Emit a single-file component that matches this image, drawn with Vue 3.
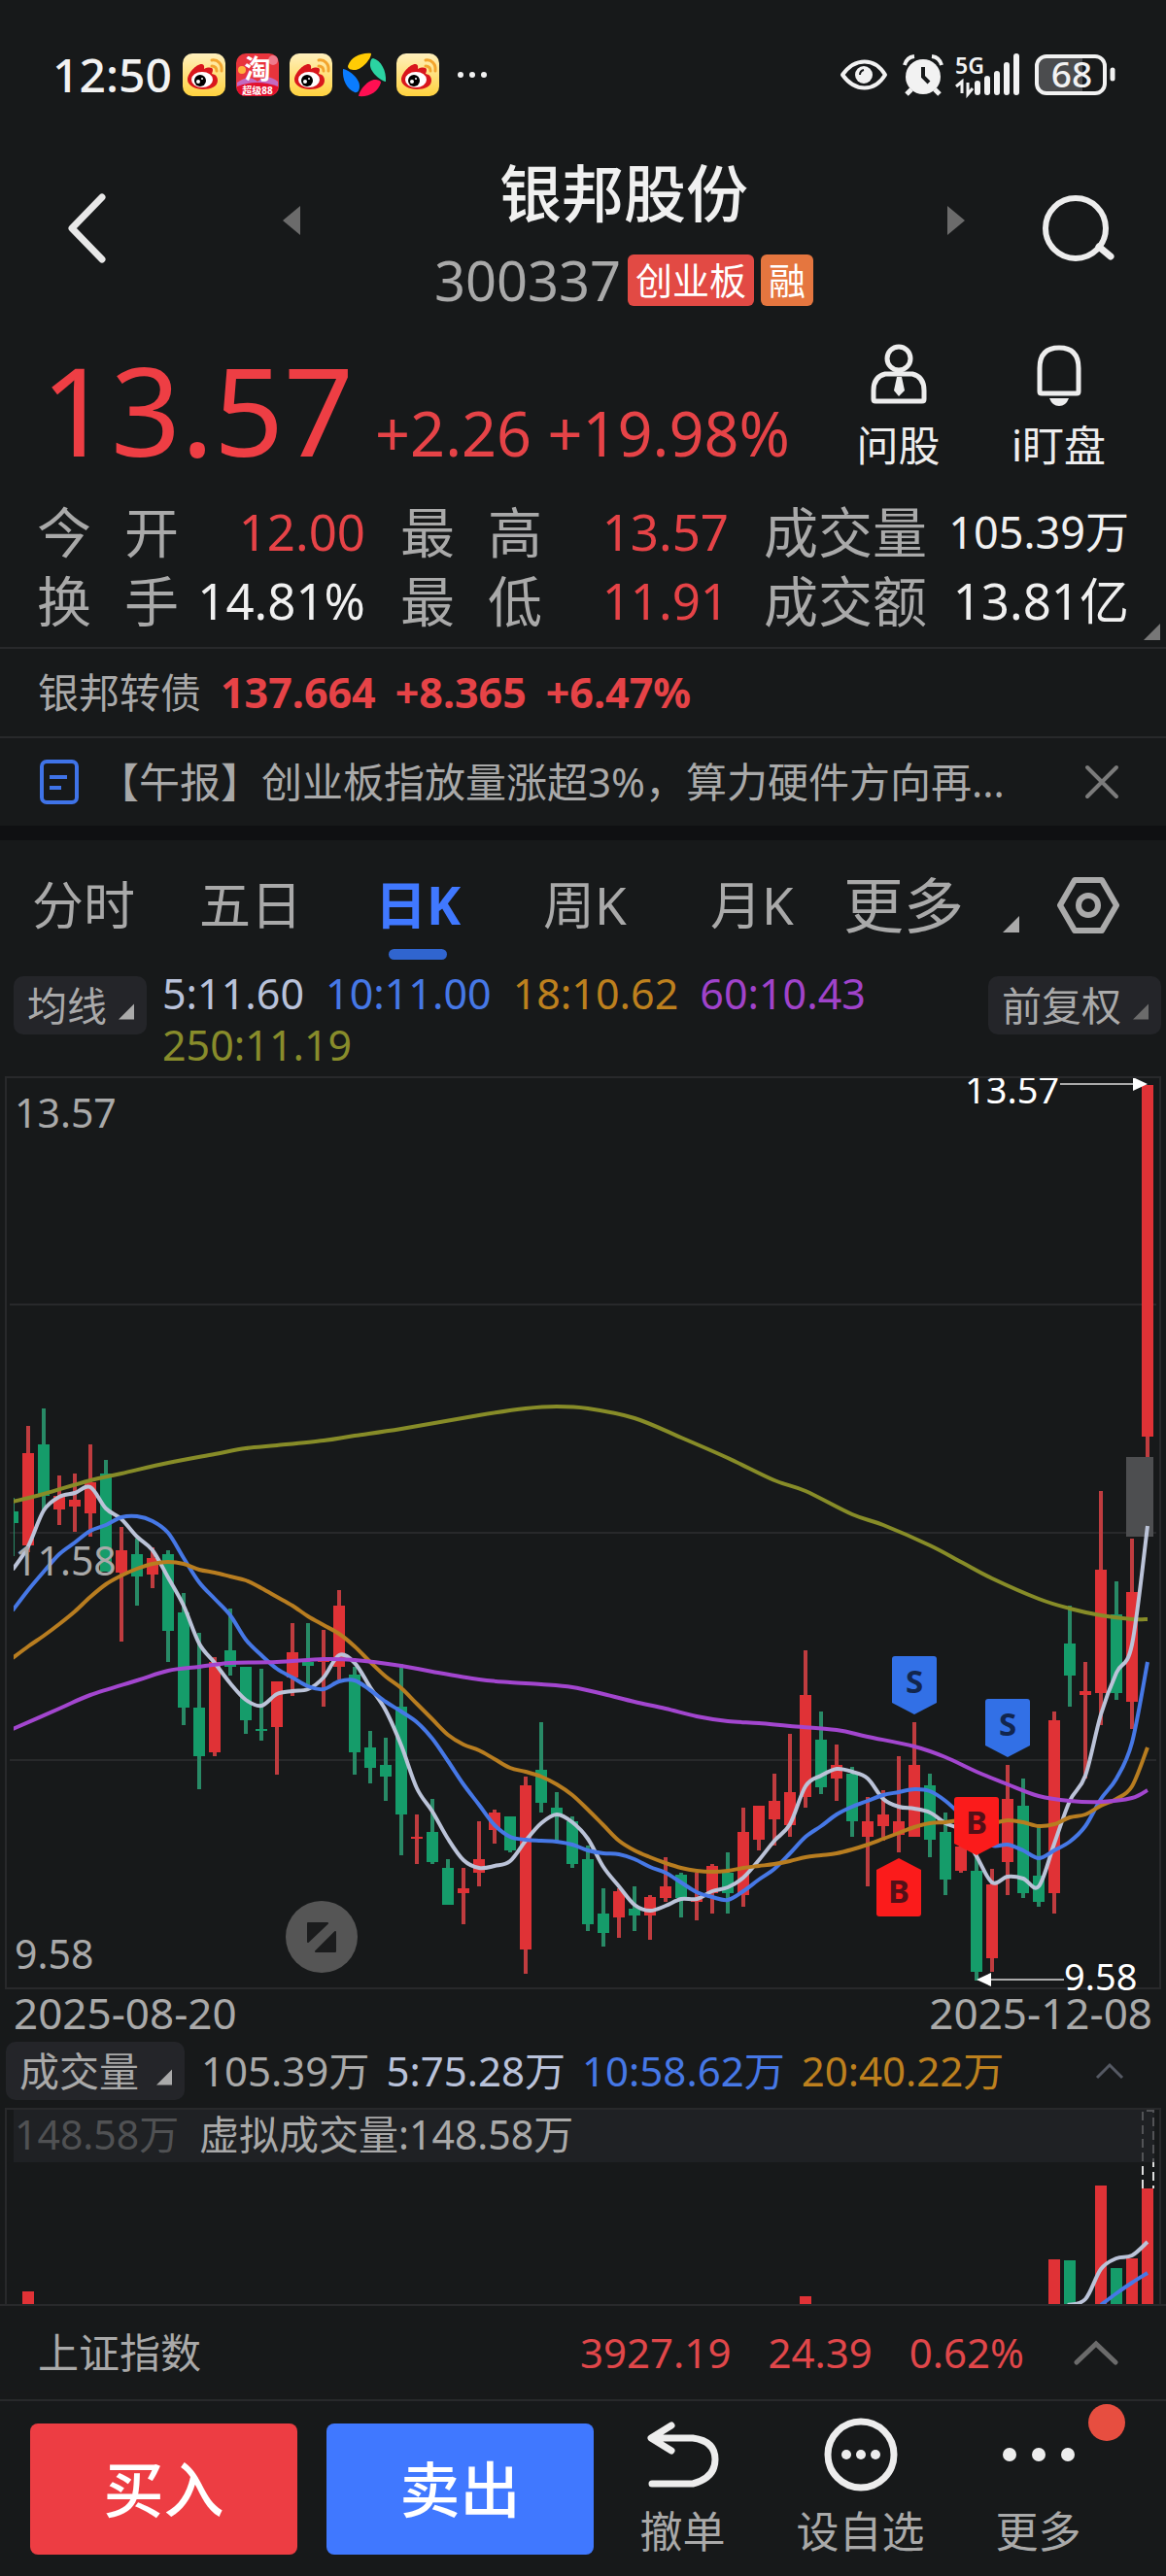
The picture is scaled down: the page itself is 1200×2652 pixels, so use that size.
<script setup>
import {ref, computed} from 'vue';

const tabs = ['分时', '五日', '日K', '周K', '月K'];
const activeTab = ref('日K');
const showNews = ref(true);

const stats = ref([
  {label: '今开', value: '12.00', up: true},
  {label: '最高', value: '13.57', up: true},
  {label: '成交量', value: '105.39万', small: true},
  {label: '换手', value: '14.81%'},
  {label: '最低', value: '11.91', up: true},
  {label: '成交额', value: '13.81亿'},
]);

const maList = [
  {text: '5:11.60', name: 'ma5'},
  {text: '10:11.00', name: 'ma10'},
  {text: '18:10.62', name: 'ma18'},
  {text: '60:10.43', name: 'ma60'},
  {text: '250:11.19', name: 'ma250'},
];

// [涨跌, 最高, 实体上沿, 实体下沿, 最低]  r = 涨, g = 跌
const candles = [
  ['g', 442, 456, 468, 502], ['r', 368, 396, 491, 498], ['g', 350, 387, 440, 455], ['r', 419, 440, 454, 470],
  ['r', 417, 444, 451, 477], ['r', 387, 426, 458, 482], ['g', 403, 417, 518, 518], ['r', 472, 496, 519, 590],
  ['g', 484, 500, 523, 553], ['r', 493, 504, 521, 535], ['g', 496, 500, 579, 611], ['g', 540, 560, 658, 676],
  ['g', 581, 658, 708, 742], ['r', 606, 611, 704, 708], ['g', 556, 599, 616, 625], ['g', 616, 616, 671, 685],
  ['g', 618, 680, 682, 692], ['r', 631, 631, 678, 727], ['r', 571, 601, 627, 646], ['g', 571, 611, 615, 636],
  ['r', 578, 609, 611, 657], ['r', 537, 553, 616, 629], ['g', 616, 624, 704, 727], ['g', 682, 699, 720, 736],
  ['g', 689, 717, 729, 754], ['g', 613, 657, 768, 810], ['r', 768, 791, 793, 819], ['g', 752, 786, 817, 819],
  ['g', 814, 823, 861, 861], ['r', 823, 844, 849, 881], ['r', 775, 814, 828, 842], ['r', 763, 766, 784, 798],
  ['g', 770, 770, 805, 807], ['r', 729, 738, 907, 932], ['g', 673, 722, 756, 766], ['g', 745, 761, 768, 795],
  ['g', 770, 775, 819, 823], ['g', 800, 814, 881, 888], ['g', 844, 870, 890, 904], ['r', 844, 847, 874, 895],
  ['g', 842, 865, 872, 888], ['r', 851, 853, 872, 897], ['r', 812, 842, 854, 858], ['g', 828, 830, 854, 874],
  ['r', 828, 855, 858, 877], ['r', 819, 821, 849, 870], ['g', 807, 828, 849, 870], ['r', 761, 786, 851, 863],
  ['r', 759, 759, 794, 805], ['r', 726, 754, 773, 800], ['r', 685, 745, 779, 791], ['r', 599, 645, 750, 761],
  ['g', 662, 691, 740, 747], ['r', 696, 717, 731, 754], ['g', 719, 726, 775, 791], ['r', 750, 775, 791, 842],
  ['r', 743, 768, 780, 795], ['r', 708, 775, 789, 807], ['r', 673, 717, 791, 791], ['g', 726, 738, 794, 812],
  ['g', 766, 786, 835, 851], ['r', 798, 801, 826, 828], ['g', 809, 826, 930, 939], ['r', 824, 840, 916, 930],
  ['r', 717, 752, 817, 851], ['g', 731, 759, 849, 854], ['g', 780, 831, 858, 863], ['r', 662, 671, 849, 870],
  ['g', 553, 592, 625, 657], ['r', 611, 641, 645, 731], ['r', 435, 516, 643, 676], ['g', 528, 562, 643, 650],
  ['r', 484, 539, 652, 680], ['r', 17, 17, 379, 401],
];

const ma5 = [516, 492, 455, 441, 437, 431, 453, 464, 482, 496, 524, 553, 592, 612, 633, 650, 656, 644, 641, 639, 627,
  604, 612, 637, 661, 697, 741, 765, 793, 815, 823, 821, 816, 795, 777, 768, 776, 793, 822, 842, 861, 867, 862, 855,
  855, 847, 843, 833, 815, 795, 778, 739, 728, 721, 724, 731, 752, 760, 762, 766, 777, 785, 811, 838, 832, 834, 842,
  798, 754, 728, 665, 622, 593, 471];
const ma10 = [558, 537, 518, 500, 488, 476, 470, 462, 461, 466, 478, 504, 529, 546, 563, 588, 604, 618, 627, 636, 639,
  631, 630, 640, 652, 662, 673, 690, 713, 737, 758, 779, 791, 794, 795, 796, 799, 805, 808, 809, 814, 822, 828, 838,
  848, 853, 856, 847, 835, 824, 808, 791, 780, 768, 760, 754, 748, 745, 742, 744, 754, 769, 787, 800, 799, 805, 813,
  805, 796, 780, 752, 731, 694, 611];
const ma18 = [607, 595, 584, 572, 559, 544, 531, 522, 515, 510, 508, 510, 516, 519, 523, 527, 535, 544, 553, 564, 573,
  582, 595, 611, 626, 638, 654, 670, 686, 696, 702, 711, 720, 724, 729, 737, 748, 763, 779, 795, 805, 812, 818, 823,
  826, 827, 826, 823, 821, 819, 816, 812, 810, 808, 804, 799, 793, 787, 781, 777, 776, 774, 776, 777, 774, 776, 780,
  778, 771, 768, 759, 752, 739, 699];
// 长周期均线变化慢，只取关键点 [序号, y]
const ma60 = [[0, 680], [3, 659], [5, 645], [8, 630], [10, 620], [12, 616], [14, 612], [17, 611], [20, 608], [22, 609],
  [25, 615], [27, 621], [30, 629], [32, 632], [34, 634], [36, 637], [38, 644], [40, 652], [42, 659], [44, 667],
  [46, 672], [48, 674], [50, 677], [53, 681], [55, 688], [58, 698], [60, 709], [62, 724], [64, 737], [66, 749],
  [68, 754], [70, 755], [72, 751], [73, 743]];
const ma250 = [[0, 446], [2, 438], [5, 424], [7, 417], [10, 406], [13, 397], [15, 391], [17, 388], [20, 383],
  [22, 378], [25, 371], [30, 357], [33, 350], [35, 348], [37, 350], [40, 360], [43, 380], [46, 401], [49, 424],
  [51, 435], [54, 459], [56, 470], [59, 491], [61, 508], [63, 525], [66, 546], [68, 556], [70, 563], [72, 567],
  [73, 567]];

const candleX = (i) => 13 + i * 16;

const smooth = (pts) => {
  let d = `M${pts[0][0]} ${pts[0][1]}`;
  for (let i = 0; i < pts.length - 1; i++) {
    const p0 = pts[i - 1] || pts[i];
    const p1 = pts[i];
    const p2 = pts[i + 1];
    const p3 = pts[i + 2] || p2;
    d += `C${p1[0] + (p2[0] - p0[0]) / 6} ${p1[1] + (p2[1] - p0[1]) / 6} `;
    d += `${p2[0] - (p3[0] - p1[0]) / 6} ${p2[1] - (p3[1] - p1[1]) / 6} ${p2[0]} ${p2[1]}`;
  }
  return d;
}

const lines = computed(() => [
  {name: 'ma250', d: smooth(ma250.map(([i, y]) => [candleX(i), y]))},
  {name: 'ma5', d: smooth(ma5.map((y, i) => [candleX(i), y]))},
  {name: 'ma10', d: smooth(ma10.map((y, i) => [candleX(i), y]))},
  {name: 'ma18', d: smooth(ma18.map((y, i) => [candleX(i), y]))},
  {name: 'ma60', d: smooth(ma60.map(([i, y]) => [candleX(i), y]))},
]);

// 买卖点标记
const marks = [
  {type: 'S', x: 941, y: 605},
  {type: 'S', x: 1037, y: 649},
  {type: 'B', x: 925, y: 813, up: true},
  {type: 'B', x: 1005, y: 750},
];

const volumes = [
  {i: 1, y: 189, c: 'r'},
  {i: 51, y: 194, c: 'r'},
  {i: 67, y: 156, c: 'r'},
  {i: 68, y: 157, c: 'g'},
  {i: 70, y: 80, c: 'r'},
  {i: 71, y: 165, c: 'g'},
  {i: 72, y: 155, c: 'r'},
  {i: 73, y: 83, c: 'r'},
];
const vol5 = smooth([[1099, 203], [1117, 197], [1133, 166], [1149, 155], [1165, 152], [1181, 138]]);
const vol10 = smooth([[1133, 203], [1149, 191], [1165, 180], [1181, 170]]);
</script>

<template>
  <div class="page">
    <div class="status">
      <span class="time">12:50</span>
      <template v-for="app in ['weibo', 'taobao', 'weibo', 'pinwheel', 'weibo']">
        <svg v-if="app === 'weibo'" class="app-icon" viewBox="0 0 44 44">
          <defs>
            <linearGradient id="wb" x1="0" y1="0" x2="0" y2="1">
              <stop offset="0" stop-color="#fff0bd"/>
              <stop offset="1" stop-color="#ffd23e"/>
            </linearGradient>
          </defs>
          <rect width="44" height="44" rx="10" fill="url(#wb)"/>
          <path d="M5 27C5 20 15 10 20 11c3 1 2 4 2 5 4-2 9-2 9 1 0 2-1 3-1 4 5 1 6 4 6 7 0 6-7 9-15 9S5 33 5 27z" fill="#d9161c"/>
          <ellipse cx="20" cy="27" rx="11" ry="8" fill="#fff"/>
          <circle cx="18" cy="28" r="6" fill="#000"/>
          <circle cx="16" cy="29" r="2" fill="#fff"/>
          <circle cx="20" cy="26" r="1" fill="#fff"/>
          <path d="M30 7c6-1 11 4 10 11M30 13c3 0 5 2 5 5" fill="none" stroke="#f3a52e" stroke-width="3" stroke-linecap="round"/>
        </svg>
        <svg v-else-if="app === 'taobao'" class="app-icon" viewBox="0 0 44 44">
          <rect width="44" height="44" rx="10" fill="#e8343c"/>
          <circle cx="6" cy="17" r="4" fill="#ffb23e"/>
          <circle cx="38" cy="7" r="5" fill="#f07a8c"/>
          <path d="M1 30q12-9 21-1 10-9 21 0v5H1z" fill="#c46ac0"/>
          <path d="M1 34q20-8 42 0v2q-3 8-10 8H10q-8 0-9-8z" fill="#e30f2c"/>
          <text x="22" y="26" font-size="27" font-weight="700" text-anchor="middle" fill="#fff">淘</text>
          <text x="22" y="42" font-size="10" font-weight="700" text-anchor="middle" fill="#fff">超级88</text>
        </svg>
        <svg v-else class="app-icon" viewBox="0 0 44 44">
          <path d="M5 13C8 4 18-1 29 0c0 6-10 17-17 17-4 0-7-1-7-4z" fill="#ffcb05"/>
          <path d="M31 5c8 2 14 13 13 24C38 28 27 18 28 11c0-3 1-6 3-6z" fill="#2bd4a2"/>
          <path d="M39 30c-3 10-12 15-23 14 1-7 10-17 17-17 3 0 6 1 6 3z" fill="#ff0f52"/>
          <path d="M12 40C4 37-1 27 0 16c7 1 18 11 17 18 0 4-2 7-5 6z" fill="#0a7cff"/>
        </svg>
      </template>
      <svg class="dots" viewBox="0 0 34 10">
        <circle cx="4" cy="5" r="3" fill="#f2f2f2"/>
        <circle cx="16" cy="5" r="3" fill="#f2f2f2"/>
        <circle cx="28" cy="5" r="3" fill="#f2f2f2"/>
      </svg>
      <svg class="system" viewBox="0 0 284 44">
        <path d="M3 22C16 4 36 4 47 22C36 40 16 40 3 22z" fill="none" stroke="#f2f2f2" stroke-width="4" stroke-linejoin="round"/>
        <circle cx="25" cy="22" r="9" fill="#f2f2f2"/>
        <path d="M21 22q0-4 4-5" fill="none" stroke="#17191a" stroke-width="2"/>
        <circle cx="86" cy="24" r="18" fill="#f2f2f2"/>
        <path d="M67 12q2-8 10-9M105 12q-2-8-10-9" fill="none" stroke="#f2f2f2" stroke-width="4"/>
        <path d="M74 37l-5 5M98 37l5 5" stroke="#f2f2f2" stroke-width="5"/>
        <path d="M86 14v10l6 6" fill="none" stroke="#17191a" stroke-width="4"/>
        <text x="119" y="21" font-size="23" font-weight="600" fill="#f2f2f2">5G</text>
        <path d="M120 34l6-5v12M132 30v12l5-6" fill="none" stroke="#f2f2f2" stroke-width="3"/>
        <path d="M142 31v9M152 26v14M162 21v19M172 12v28M182 3v37" stroke="#f2f2f2" stroke-width="6" stroke-linecap="round"/>
        <path d="M213 3h37v38h-37q-9 0-9-9V12q0-9 9-9z" fill="#4b4c4e"/>
        <rect x="203" y="3" width="70" height="38" rx="10" fill="none" stroke="#f2f2f2" stroke-width="4"/>
        <text x="239" y="35" font-size="37" font-weight="500" text-anchor="middle" fill="#f2f2f2">68</text>
        <path d="M281 17v9" stroke="#f2f2f2" stroke-width="5" stroke-linecap="round"/>
      </svg>
    </div>

    <header class="header">
      <button class="back" aria-label="返回">
        <svg width="46" height="80" viewBox="0 0 46 80"><path d="M39 8L8 40l31 32" fill="none" stroke="#e8e8e8" stroke-width="7" stroke-linecap="round" stroke-linejoin="round"/></svg>
      </button>
      <button class="switch" aria-label="上一只">
        <svg width="18" height="30" viewBox="0 0 18 30"><path d="M18 0v30L0 15z" fill="#6b6b6b"/></svg>
      </button>
      <div class="title">
        <h1>银邦股份</h1>
        <div class="code">
          <span>300337</span>
          <b class="tag">创业板</b>
          <b class="tag orange">融</b>
        </div>
      </div>
      <button class="switch" aria-label="下一只">
        <svg width="18" height="30" viewBox="0 0 18 30"><path d="M0 0v30l18-15z" fill="#6b6b6b"/></svg>
      </button>
      <button class="search" aria-label="搜索">
        <svg width="80" height="76" viewBox="0 0 80 76"><circle cx="37" cy="38" r="31" fill="none" stroke="#ededed" stroke-width="6"/><path d="M61 57l12 10" stroke="#ededed" stroke-width="7" stroke-linecap="round"/></svg>
      </button>
    </header>

    <section class="quote">
      <div class="price">
        <strong>13.57</strong>
        <span>+2.26 +19.98%</span>
      </div>
      <button class="tool">
        <svg width="60" height="64" viewBox="0 0 60 64" fill="none" stroke="#ededed" stroke-width="5">
          <circle cx="30" cy="15" r="12"/>
          <path d="M16 31h28q12 3 12 17v9q0 2-2 2H6q-2 0-2-2v-9Q4 34 16 31z" stroke-linejoin="round"/>
          <path d="M28 34h5l3 14-6 6-5-6z" fill="#ededed" stroke="none"/>
        </svg>
        问股
      </button>
      <button class="tool">
        <svg width="60" height="64" viewBox="0 0 60 64" fill="none" stroke="#ededed" stroke-width="5">
          <path d="M10 49V25q0-21 20-21t20 21v24q0 2-2 2H12q-2 0-2-2z"/>
          <path d="M20 56h20q-3 8-10 8t-10-8z" fill="#ededed" stroke="none"/>
        </svg>
        i盯盘
      </button>
    </section>

    <section class="stats">
      <div v-for="item in stats" :key="item.label" class="stat">
        <span class="label"><i v-for="ch in item.label" :key="ch">{{ ch }}</i></span>
        <span class="value" :class="{up: item.up, small: item.small}">{{ item.value }}</span>
      </div>
      <svg class="corner" width="17" height="17" viewBox="0 0 17 17"><path d="M17 0v17H0z" fill="#777"/></svg>
    </section>

    <section class="bond">
      <span>银邦转债</span>
      <b>137.664</b>
      <b>+8.365</b>
      <b>+6.47%</b>
    </section>

    <section v-if="showNews" class="news">
      <svg width="40" height="46" viewBox="0 0 40 46" fill="none" stroke="#3f73e8" stroke-width="4">
        <rect x="2" y="2" width="36" height="42" rx="5"/>
        <path d="M10 18h18M10 29h12"/>
      </svg>
      <a href="#">【午报】创业板指放量涨超3%，算力硬件方向再...</a>
      <button aria-label="关闭" @click="showNews = false">
        <svg width="36" height="36" viewBox="0 0 36 36"><path d="M3 3l30 30M33 3L3 33" stroke="#7b7b7b" stroke-width="4" stroke-linecap="round"/></svg>
      </button>
    </section>

    <nav class="tabs">
      <button v-for="tab in tabs" :key="tab" class="tab" :class="{active: tab === activeTab}" @click="activeTab = tab">
        {{ tab }}
      </button>
      <div class="tabs-more">
        <button class="more">更多</button>
        <svg class="tri" width="17" height="17" viewBox="0 0 17 17"><path d="M17 0v17H0z" fill="#aaa"/></svg>
        <button aria-label="设置">
          <svg width="64" height="60" viewBox="0 0 64 60" fill="none" stroke="#aaa" stroke-width="6">
            <path d="M18 4h28l15 26-15 26H18L3 30z" stroke-linejoin="round"/>
            <circle cx="32" cy="30" r="10"/>
          </svg>
        </button>
      </div>
    </nav>

    <section class="ma">
      <button class="chip">均线
        <svg width="16" height="17" viewBox="0 0 17 17"><path d="M17 0v17H0z" fill="#aaa"/></svg>
      </button>
      <div class="ma-list">
        <span v-for="ma in maList" :key="ma.name" :class="ma.name">{{ ma.text }}</span>
      </div>
      <button class="chip">前复权
        <svg width="16" height="17" viewBox="0 0 17 17"><path d="M17 0v17H0z" fill="#6b6b6b"/></svg>
      </button>
    </section>

    <svg class="chart" viewBox="0 0 1200 950">
      <defs>
        <clipPath id="plot"><rect x="14" y="9" width="1174" height="938"/></clipPath>
        <clipPath id="frame"><rect x="0" y="10" width="1200" height="940"/></clipPath>
      </defs>
      <g fill="none" stroke="#28292b" stroke-width="2">
        <rect x="6" y="9" width="1188" height="938"/>
        <path d="M10 243H1190M10 478H1190M10 712H1190"/>
      </g>
      <g clip-path="url(#plot)">
        <g v-for="(c, i) in candles" :key="i" :class="c[0]">
          <rect class="wick" :x="candleX(i) - 2" :y="c[1]" width="4" :height="c[4] - c[1]"/>
          <rect :x="candleX(i) - 6" :y="c[2]" width="12" :height="c[3] - c[2]"/>
        </g>
        <rect x="1159" y="400" width="28" height="82" fill="#4d4e50"/>
        <path v-for="line in lines" :key="line.name" class="line" :class="line.name" :d="line.d"/>
      </g>
      <g v-for="m in marks" :key="m.x" :transform="`translate(${m.x} ${m.y})`">
        <path v-if="m.up" d="M0 0L23 12V57q0 3-3 3H-20q-3 0-3-3V12z" fill="#fb1b1b"/>
        <path v-else d="M-20 0H20q3 0 3 3V48L0 60L-23 48V3q0-3 3-3z" :fill="m.type === 'S' ? '#3270e6' : '#fb1b1b'"/>
        <text class="mark" :class="m.type" x="0" :y="m.up ? 46 : 38">{{ m.type }}</text>
      </g>
      <circle cx="331" cy="894" r="37" fill="#555"/>
      <path d="M317 880h20l-20 19zM345 889v20h-20z" fill="#1b1c1d" stroke="#1b1c1d" stroke-width="2" stroke-linejoin="round"/>
      <g class="axis">
        <text x="15" y="61">13.57</text>
        <text x="15" y="522">11.58</text>
        <text x="15" y="927">9.58</text>
      </g>
      <g class="peak" clip-path="url(#frame)">
        <text x="993" y="36">13.57</text>
        <text x="1095" y="949">9.58</text>
        <path d="M1091 16h76M1018 938h77" stroke="#aaa" stroke-width="2"/>
        <path d="M1166 9l15 7-15 7zM1020 931v14l-15-7z"/>
      </g>
    </svg>

    <div class="dates">
      <span>2025-08-20</span>
      <span>2025-12-08</span>
    </div>

    <section class="volume">
      <button class="chip">成交量
        <svg width="16" height="17" viewBox="0 0 17 17"><path d="M17 0v17H0z" fill="#aaa"/></svg>
      </button>
      <span>105.39万</span>
      <span class="ma5">5:75.28万</span>
      <span class="ma10">10:58.62万</span>
      <span class="ma18">20:40.22万</span>
      <button class="fold" aria-label="收起">
        <svg width="32" height="20" viewBox="0 0 32 20"><path d="M3 17L16 4l13 13" fill="none" stroke="#555963" stroke-width="3"/></svg>
      </button>
    </section>

    <svg class="chart" viewBox="0 0 1200 202">
      <path d="M6 202V1H1194V202" fill="none" stroke="#28292b" stroke-width="2"/>
      <rect v-for="v in volumes" :key="v.i" :class="v.c" :x="candleX(v.i) - 6" :y="v.y" width="12" :height="202 - v.y"/>
      <path d="M1176 83V3H1187V83" fill="none" stroke="#ddd" stroke-width="2" stroke-dasharray="9 5"/>
      <path class="line ma5" :d="vol5"/>
      <path class="line ma10" :d="vol10"/>
      <rect x="14" y="2" width="1174" height="54" fill="#232428" fill-opacity="0.75"/>
      <text class="virtual dim" x="15" y="43">148.58万</text>
      <text class="virtual" x="205" y="43">虚拟成交量:148.58万</text>
    </svg>

    <section class="index">
      <span class="name">上证指数</span>
      <span>3927.19</span>
      <span>24.39</span>
      <span>0.62%</span>
      <button aria-label="展开">
        <svg width="46" height="26" viewBox="0 0 46 26"><path d="M3 23L23 4l20 19" fill="none" stroke="#6b6b6b" stroke-width="5" stroke-linecap="round"/></svg>
      </button>
    </section>

    <footer class="footer">
      <button class="trade buy">买入</button>
      <button class="trade sell">卖出</button>
      <div class="actions">
        <button class="action">
          <svg width="76" height="76" viewBox="0 0 76 76" fill="none" stroke="#ededed" stroke-width="7" stroke-linecap="round" stroke-linejoin="round">
            <path d="M26 8L5 21l21 13M6 21h42q23 3 23 22T48 68H6"/>
          </svg>
          撤单
        </button>
        <button class="action">
          <svg width="76" height="76" viewBox="0 0 76 76">
            <circle cx="38" cy="38" r="34" fill="none" stroke="#ededed" stroke-width="7"/>
            <g fill="#ededed"><circle cx="23" cy="38" r="5"/><circle cx="38" cy="38" r="5"/><circle cx="53" cy="38" r="5"/></g>
          </svg>
          设自选
        </button>
        <button class="action">
          <svg width="76" height="76" viewBox="0 0 76 76" fill="#ededed"><circle cx="8" cy="38" r="7"/><circle cx="38" cy="38" r="7"/><circle cx="68" cy="38" r="7"/></svg>
          更多
          <span class="badge"></span>
        </button>
      </div>
    </footer>
  </div>
</template>

<style>
body {
  background: #17191a;
}
</style>

<style scoped>
.page {
  background: #17191a;
  color: #a9a9a9;
  font-family: "Noto Sans", "Noto Sans CJK SC", sans-serif;
  font-size: 42px;
  line-height: 60px;
  overflow: hidden;
}

button {
  background: none;
  border: none;
  padding: 0;
  margin: 0;
  color: inherit;
  font: inherit;
  cursor: pointer;
}

svg {
  display: block;
  flex-shrink: 0;
}

.status {
  display: flex;
  align-items: center;
  gap: 11px;
  height: 154px;
  padding: 0 52px 0 54px;
  box-sizing: border-box;
}

.status svg {
  overflow: visible;
}

.time {
  color: #f2f2f2;
  font-size: 48px;
  font-weight: 500;
}

.app-icon {
  width: 44px;
  height: 44px;
}

.dots {
  width: 34px;
  margin-left: 7px;
}

.system {
  width: 284px;
  margin-left: auto;
}

.header {
  display: flex;
  align-items: center;
  height: 180px;
  padding: 0 50px 0 66px;
  box-sizing: border-box;
}

.switch {
  padding: 0 179px;
  margin-bottom: 34px;
}

.switch + .search {
  margin-left: -102px;
}

.back, .search {
  margin-bottom: 18px;
}

.title {
  flex: 1;
  margin: 0 -150px;
  text-align: center;
}

h1 {
  margin: 0;
  color: #f0f0f0;
  font-size: 64px;
  font-weight: 500;
  line-height: 88px;
}

.code {
  display: flex;
  align-items: center;
  justify-content: center;
  gap: 7px;
  height: 90px;
  font-size: 56px;
}

.tag {
  padding: 0 8px;
  background: #e24a44;
  border-radius: 6px;
  color: #fff;
  font-size: 38px;
  font-weight: 400;
  line-height: 53px;
}

.tag.orange {
  background: #e5763f;
}

.quote {
  display: flex;
  height: 178px;
  padding: 0 28px 0 42px;
}

.price {
  display: flex;
  align-items: baseline;
  flex: 1;
  gap: 22px;
  padding-top: 22px;
  color: #e64347;
  font-size: 63px;
  white-space: nowrap;
}

.price strong {
  color: #ee3e44;
  font-size: 126px;
  font-weight: 400;
  line-height: 130px;
}

.tool {
  display: flex;
  flex-direction: column;
  align-items: center;
  gap: 11px;
  width: 165px;
  padding-top: 20px;
  color: #ededed;
  font-size: 43px;
}

.stats {
  position: relative;
  display: grid;
  grid-template-columns: 338fr 338fr 376fr;
  column-gap: 36px;
  padding: 0 38px 12px;
  border-bottom: 2px solid #28292b;
}

.stat {
  display: flex;
  justify-content: space-between;
  line-height: 71px;
}

.label {
  display: flex;
  justify-content: space-between;
  min-width: 146px;
  font-size: 56px;
}

.label i {
  font-style: normal;
}

.value {
  color: #f0f0f0;
  font-size: 51px;
}

.value.small {
  font-size: 45px;
}

.value.up {
  color: #e64347;
}

.corner {
  position: absolute;
  right: 6px;
  bottom: 7px;
}

.bond {
  display: flex;
  gap: 20px;
  padding: 0 39px;
  border-bottom: 2px solid #28292b;
  line-height: 90px;
}

.bond b {
  color: #e64347;
  font-size: 43px;
}

.news {
  display: flex;
  align-items: center;
  justify-content: space-between;
  height: 90px;
  padding: 0 48px 0 41px;
  border-bottom: 15px solid #0f1012;
}

.news a {
  flex: 1;
  margin: 0 30px 0 20px;
  overflow: hidden;
  color: inherit;
  text-decoration: none;
  white-space: nowrap;
}

.tabs {
  display: flex;
  height: 134px;
  font-size: 53px;
}

.tab {
  position: relative;
  flex: 1;
}

.tab.active {
  color: #4078ff;
  font-weight: 700;
}

.tab.active::after {
  content: "";
  position: absolute;
  left: 50%;
  bottom: 11px;
  width: 60px;
  height: 11px;
  margin-left: -30px;
  border-radius: 6px;
  background: #3065cf;
}

.tabs-more {
  display: flex;
  align-items: center;
  justify-content: space-between;
  width: 284px;
  padding: 0 48px 0 8px;
}

.more {
  font-size: 62px;
}

.tabs-more .tri {
  margin-top: 38px;
}

.ma {
  display: flex;
  align-items: flex-start;
  gap: 16px;
  padding: 6px 5px 0 14px;
}

.ma-list {
  display: flex;
  flex: 1;
  flex-wrap: wrap;
  gap: 5px 22px;
  margin-top: -6px;
  padding-right: 110px;
  line-height: 48px;
}

.chip {
  display: flex;
  align-items: flex-end;
  gap: 12px;
  padding: 0 13px 0 14px;
  background: #242529;
  border-radius: 10px;
  font-size: 41px;
  line-height: 60px;
}

.chip svg {
  margin-bottom: 15px;
}

.ma-list span {
  font-size: 43px;
}

span.ma5 {
  color: #b9c2da;
}

span.ma10 {
  color: #4678e6;
}

span.ma18 {
  color: #bd801e;
}

span.ma60 {
  color: #a043ca;
}

span.ma250 {
  color: #888c2b;
}

.chart {
  width: 100%;
  height: auto;
}

.r {
  fill: #e03236;
}

.g {
  fill: #159c6a;
}

.r .wick {
  fill: #bf3c3f;
}

.g .wick {
  fill: #288a66;
}

.line {
  fill: none;
  stroke-width: 4px;
}

.line.ma5 {
  stroke: #bbc3d8;
}

.line.ma10 {
  stroke: #4678e6;
}

.line.ma18 {
  stroke: #b87d20;
}

.line.ma60 {
  stroke: #a346cf;
}

.line.ma250 {
  stroke: #878c28;
}

.mark {
  font-size: 33px;
  font-weight: 700;
  text-anchor: middle;
}

.mark.S {
  fill: #12264d;
}

.mark.B {
  fill: #521018;
}

.axis {
  fill: #a9a9a9;
  font-size: 41px;
}

.peak {
  fill: #fff;
  font-size: 38px;
}

.dates {
  display: flex;
  justify-content: space-between;
  padding: 0 14px;
  font-size: 44px;
  line-height: 44px;
}

.volume {
  display: flex;
  align-items: center;
  gap: 17px;
  height: 76px;
  padding: 0 42px 0 6px;
  font-size: 42px;
}

.volume .chip {
  gap: 18px;
}

.fold {
  margin-left: auto;
}

.virtual {
  fill: #a9a9a9;
  font-size: 41px;
}

.virtual.dim {
  fill: #505153;
}

.index {
  display: flex;
  align-items: center;
  gap: 38px;
  height: 96px;
  padding: 0 49px 0 39px;
  border-top: 2px solid #28292b;
  border-bottom: 2px solid #28292b;
  color: #e0474a;
}

.index .name {
  flex: 1;
  color: #a9a9a9;
}

.index button {
  margin-left: 13px;
}

.footer {
  display: flex;
  gap: 30px;
  padding: 23px 40px 22px 31px;
}

.trade {
  width: 275px;
  height: 135px;
  border-radius: 8px;
  color: #fff;
  font-size: 62px;
  font-weight: 500;
}

.buy {
  background: #ed3d43;
}

.sell {
  background: #4078ff;
}

.actions {
  display: flex;
  flex: 1;
  margin-left: -30px;
}

.action {
  position: relative;
  display: flex;
  flex: 1;
  flex-direction: column;
  align-items: center;
  justify-content: space-between;
  height: 147px;
  margin-top: -6px;
  font-size: 44px;
}

.badge {
  position: absolute;
  top: -14px;
  right: 2px;
  width: 38px;
  height: 38px;
  border-radius: 50%;
  background: #e74e40;
}
</style>
